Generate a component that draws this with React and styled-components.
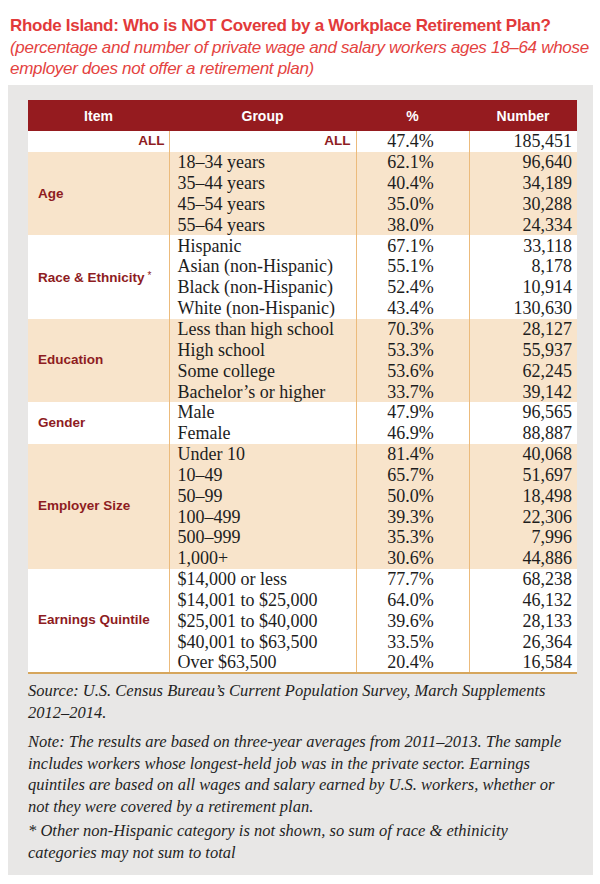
import styled, { createGlobalStyle } from "styled-components";

const GlobalStyle = createGlobalStyle`
  body {
    margin: 0;
    background: #fff;
  }
`;

const Page = styled.div`
  width: 600px;
  padding: 15px 0 0 0;
  box-sizing: border-box;
`;

const Heading = styled.div`
  padding: 0 0 0 10px;
  color: #e23a3a;
  font-family: "Liberation Sans", Arial, sans-serif;
  white-space: nowrap;

  h1 {
    margin: 0;
    font-size: 17px;
    line-height: 22px;
    font-weight: 700;
    letter-spacing: -0.3px;
  }

  p {
    margin: 0;
    font-style: italic;
    font-size: 17px;
    line-height: 21px;
    letter-spacing: -0.3px;
    color: #e4433f;
  }
`;

const Panel = styled.div`
  margin: 6px 7px 0 8px;
  padding: 15px 15px 12px 20px;
  background: #e8e7e6;
`;

const Table = styled.table`
  width: 549px;
  border-collapse: collapse;
  table-layout: fixed;
  font-family: "Liberation Serif", "Times New Roman", serif;
  font-size: 18px;
  color: #1d1d1d;
  border-bottom: 2px solid #d6a65c;
`;

const HeadCell = styled.th`
  height: 31px;
  padding: 0;
  background: #951b1f;
  color: #fff;
  font-family: "Liberation Sans", Arial, sans-serif;
  font-size: 14px;
  font-weight: 700;
  text-align: center;
`;

const Row = styled.tr`
  height: 20.85px;
  background: ${(p) => (p.$band ? "#f8e4cb" : "#fff")};
`;

const LabelCell = styled.td`
  padding: 0 ${(p) => (p.$right ? "4px" : "0")} 0 ${(p) => (p.$right ? "0" : "10px")};
  text-align: ${(p) => (p.$right ? "right" : "left")};
  font-family: "Liberation Sans", Arial, sans-serif;
  font-size: 13.5px;
  font-weight: 700;
  color: #8e1c22;
  vertical-align: middle;
  line-height: 20px;

  sup {
    font-size: 10px;
    margin-left: 3px;
    vertical-align: 3px;
    font-weight: 400;
  }
`;

const Cell = styled.td`
  padding: 0 ${(p) => (p.$align === "right" ? "5px" : "4px")} 0 ${(p) => (p.$align === "left" ? "8px" : "0")};
  text-align: ${(p) => p.$align || "center"};
  border-left: 1px solid #ecbb7c;
  line-height: 20px;
  white-space: nowrap;
`;

const AllCell = styled(Cell)`
  font-family: "Liberation Sans", Arial, sans-serif;
  font-size: 13.5px;
  font-weight: 700;
  color: #8e1c22;
`;

const Notes = styled.div`
  margin-top: 6px;
  font-family: "Liberation Serif", "Times New Roman", serif;
  font-style: italic;
  font-size: 16.5px;
  line-height: 21.5px;
  color: #1f1f1f;

  p {
    margin: 0 0 8px 0;
  }

  p + p {
    margin-bottom: 3px;
  }

  p:last-child {
    margin-bottom: 0;
  }
`;

const groups = [
  {
    label: "Age",
    band: true,
    rows: [
      ["18–34 years", "62.1%", "96,640"],
      ["35–44 years", "40.4%", "34,189"],
      ["45–54 years", "35.0%", "30,288"],
      ["55–64 years", "38.0%", "24,334"],
    ],
  },
  {
    label: "Race & Ethnicity",
    star: true,
    band: false,
    rows: [
      ["Hispanic", "67.1%", "33,118"],
      ["Asian (non-Hispanic)", "55.1%", "8,178"],
      ["Black (non-Hispanic)", "52.4%", "10,914"],
      ["White (non-Hispanic)", "43.4%", "130,630"],
    ],
  },
  {
    label: "Education",
    band: true,
    rows: [
      ["Less than high school", "70.3%", "28,127"],
      ["High school", "53.3%", "55,937"],
      ["Some college", "53.6%", "62,245"],
      ["Bachelor’s or higher", "33.7%", "39,142"],
    ],
  },
  {
    label: "Gender",
    band: false,
    rows: [
      ["Male", "47.9%", "96,565"],
      ["Female", "46.9%", "88,887"],
    ],
  },
  {
    label: "Employer Size",
    band: true,
    rows: [
      ["Under 10", "81.4%", "40,068"],
      ["10–49", "65.7%", "51,697"],
      ["50–99", "50.0%", "18,498"],
      ["100–499", "39.3%", "22,306"],
      ["500–999", "35.3%", "7,996"],
      ["1,000+", "30.6%", "44,886"],
    ],
  },
  {
    label: "Earnings Quintile",
    band: false,
    rows: [
      ["$14,000 or less", "77.7%", "68,238"],
      ["$14,001 to $25,000", "64.0%", "46,132"],
      ["$25,001 to $40,000", "39.6%", "28,133"],
      ["$40,001 to $63,500", "33.5%", "26,364"],
      ["Over $63,500", "20.4%", "16,584"],
    ],
  },
];

const App = () => {
  return (
    <Page>
      <GlobalStyle />
      <Heading>
        <h1>Rhode Island: Who is NOT Covered by a Workplace Retirement Plan?</h1>
        <p>
          (percentage and number of private wage and salary workers ages 18–64 whose
          <br />
          employer does not offer a retirement plan)
        </p>
      </Heading>
      <Panel>
        <Table>
          <colgroup>
            <col style={{ width: "141px" }} />
            <col style={{ width: "187px" }} />
            <col style={{ width: "113px" }} />
            <col style={{ width: "108px" }} />
          </colgroup>
          <thead>
            <tr>
              <HeadCell>Item</HeadCell>
              <HeadCell>Group</HeadCell>
              <HeadCell>%</HeadCell>
              <HeadCell>Number</HeadCell>
            </tr>
          </thead>
          <tbody>
            <Row>
              <LabelCell $right>ALL</LabelCell>
              <AllCell $align="right">ALL</AllCell>
              <Cell>47.4%</Cell>
              <Cell $align="right">185,451</Cell>
            </Row>
            {groups.map((g) =>
              g.rows.map((r, i) => (
                <Row key={g.label + r[0]} $band={g.band}>
                  {i === 0 && (
                    <LabelCell rowSpan={g.rows.length}>
                      {g.label}
                      {g.star && <sup>*</sup>}
                    </LabelCell>
                  )}
                  <Cell $align="left">{r[0]}</Cell>
                  <Cell>{r[1]}</Cell>
                  <Cell $align="right">{r[2]}</Cell>
                </Row>
              ))
            )}
          </tbody>
        </Table>
        <Notes>
          <p>
            Source: U.S. Census Bureau’s Current Population Survey, March Supplements
            2012–2014.
          </p>
          <p>
            Note: The results are based on three-year averages from 2011–2013. The sample
            includes workers whose longest-held job was in the private sector. Earnings
            quintiles are based on all wages and salary earned by U.S. workers, whether or
            not they were covered by a retirement plan.
          </p>
          <p>
            * Other non-Hispanic category is not shown, so sum of race &amp; ethinicity
            categories may not sum to total
          </p>
        </Notes>
      </Panel>
    </Page>
  );
};

export default App;
